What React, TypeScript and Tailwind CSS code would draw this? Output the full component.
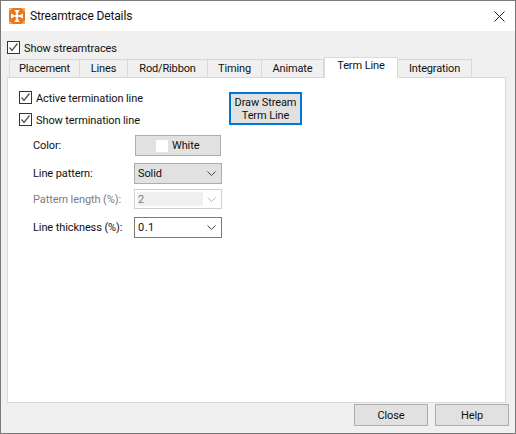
const font = "font-['Roboto','Liberation_Sans',sans-serif]";

function Check({ label }: { label: string }) {
  return (
    <div className="flex items-center h-[13px]">
      <svg width="13" height="13" viewBox="0 0 13 13" className="shrink-0">
        <rect x="0.5" y="0.5" width="12" height="12" fill="#fff" stroke="#333" />
        <path d="M2.5 6.5 L5 9.5 L10.5 2.5" fill="none" stroke="#555" strokeWidth="1.3" />
      </svg>
      <span className="ml-[4px] pt-[1px] text-[11px] tracking-[-0.1px] leading-[13px] text-[#111] whitespace-nowrap">{label}</span>
    </div>
  );
}

function Tab({ label, w, active }: { label: string; w: number; active?: boolean }) {
  if (active) {
    return (
      <div
        className="h-[21px] -mb-[1px] pb-[3px] bg-white border border-b-0 border-[#d9d9d9] flex items-center justify-center text-[11px] tracking-[-0.1px] text-[#111] z-10"
        style={{ width: w }}
      >
        {label}
      </div>
    );
  }
  return (
    <div
      className="h-[18px] pt-[2px] bg-[#f0f0f0] border border-b-0 border-l-0 first:border-l border-[#d9d9d9] flex items-center justify-center text-[11px] tracking-[-0.15px] text-[#111]"
      style={{ width: w }}
    >
      {label}
    </div>
  );
}

function Chevron({ color }: { color: string }) {
  return (
    <svg width="9" height="5" viewBox="0 0 9 5" className="shrink-0 mr-[1px]">
      <path d="M0.5 0.5 L4.5 4.5 L8.5 0.5" fill="none" stroke={color} strokeWidth="1" />
    </svg>
  );
}

function AppIcon() {
  return (
    <svg width="16" height="16" viewBox="0 0 16 16" className="shrink-0">
      <rect width="16" height="16" fill="#e8761c" />
      <path d="M0 0 L4 0 L0 4 Z M16 0 L12 0 L16 4 Z M0 16 L4 16 L0 12 Z M16 16 L12 16 L16 12 Z" fill="#f4a860" />
      <circle cx="8" cy="8" r="2" fill="#fff" />
      <path d="M5.5 2 L10.5 2 L8.5 6 L7.5 6 Z" fill="#fff" />
      <path d="M5.5 14 L10.5 14 L8.5 10 L7.5 10 Z" fill="#fff" />
      <path d="M2 5.5 L2 10.5 L6 8.5 L6 7.5 Z" fill="#fff" />
      <path d="M14 5.5 L14 10.5 L10 8.5 L10 7.5 Z" fill="#fff" />
    </svg>
  );
}

export default function App() {
  return (
    <div className={`w-[516px] h-[434px] flex flex-col bg-[#f0f0f0] border border-[#7a7a7a] overflow-hidden ${font}`}>
      <div className="h-[30px] shrink-0 bg-white flex items-center pl-[8px] pr-[10px]">
        <AppIcon />
        <span className="ml-[5px] text-[12px] tracking-[-0.15px] text-[#111]">Streamtrace Details</span>
        <svg width="11" height="11" viewBox="0 0 11 11" className="ml-auto">
          <path d="M0.5 0.5 L10.5 10.5 M10.5 0.5 L0.5 10.5" stroke="#222" strokeWidth="1" />
        </svg>
      </div>

      <div className="pl-[6px] pt-[10px] h-[26px] shrink-0">
        <Check label="Show streamtraces" />
      </div>

      <div className="pl-[8px] h-[20px] shrink-0 flex items-end">
        <Tab label="Placement" w={71} />
        <Tab label="Lines" w={48} />
        <Tab label="Rod/Ribbon" w={80} />
        <Tab label="Timing" w={54} />
        <Tab label="Animate" w={62} />
        <Tab label="Term Line" w={74} active />
        <Tab label="Integration" w={74} />
      </div>

      <div className="ml-[6px] w-[499px] h-[326px] shrink-0 bg-white border border-[#d9d9d9] pl-[11px] pt-[13px]">
        <div className="flex">
          <div className="w-[210px] flex flex-col gap-[9px]">
            <Check label="Active termination line" />
            <Check label="Show termination line" />
          </div>
          <div className="w-[73px] h-[33px] mt-[1px] bg-[#e1e1e1] border-[2px] border-[#0078d7] flex items-center justify-center text-center text-[11px] tracking-[-0.1px] leading-[13px] text-[#111] whitespace-nowrap">
            Draw Stream
            <br />
            Term Line
          </div>
        </div>

        <div className="pl-[14px] mt-[9px] flex flex-col text-[11px] tracking-[-0.1px] text-[#111] whitespace-nowrap">
          <div className="flex items-center h-[21px]">
            <span className="w-[102px] pt-[2px]">Color:</span>
            <div className="w-[86px] h-[21px] bg-[#e1e1e1] border border-[#adadad] flex items-center pl-[20px]">
              <span className="w-[12px] h-[12px] bg-white" />
              <span className="ml-[4px] pt-[2px]">White</span>
            </div>
          </div>
          <div className="flex items-center h-[21px] mt-[7px]">
            <span className="w-[101px] pt-[2px]">Line pattern:</span>
            <div className="w-[88px] h-[21px] bg-[#e1e1e1] border border-[#adadad] flex items-center justify-between pl-[3px] pr-[4px]">
              <span className="pt-[2px]">Solid</span>
              <Chevron color="#444" />
            </div>
          </div>
          <div className="flex items-center h-[20px] mt-[5px]">
            <span className="w-[101px] pt-[2px] text-[#7d7d7d]">Pattern length (%):</span>
            <div className="w-[88px] h-[20px] bg-white border border-[#cfcfcf] flex items-center justify-between pl-[2px] pr-[4px]">
              <span className="w-[66px] h-[14px] bg-[#f0f0f0] text-[#7d7d7d] leading-[14px] pl-[1px] pt-[1px]">2</span>
              <Chevron color="#bdbdbd" />
            </div>
          </div>
          <div className="flex items-center h-[21px] mt-[8px]">
            <span className="w-[101px] pt-[2px]">Line thickness (%):</span>
            <div className="w-[88px] h-[21px] bg-white border border-[#7a7a7a] flex items-center justify-between pl-[3px] pr-[4px]">
              <span className="pt-[2px] tracking-[0.5px]">0.1</span>
              <Chevron color="#444" />
            </div>
          </div>
        </div>
      </div>

      <div className="flex justify-end gap-[7px] pt-[1px] pr-[6px] text-[11px] tracking-[-0.1px] text-[#111]">
        <div className="w-[74px] h-[22px] pt-[2px] bg-[#e1e1e1] border border-[#adadad] flex items-center justify-center">Close</div>
        <div className="w-[74px] h-[22px] pt-[2px] bg-[#e1e1e1] border border-[#adadad] flex items-center justify-center">Help</div>
      </div>
    </div>
  );
}
